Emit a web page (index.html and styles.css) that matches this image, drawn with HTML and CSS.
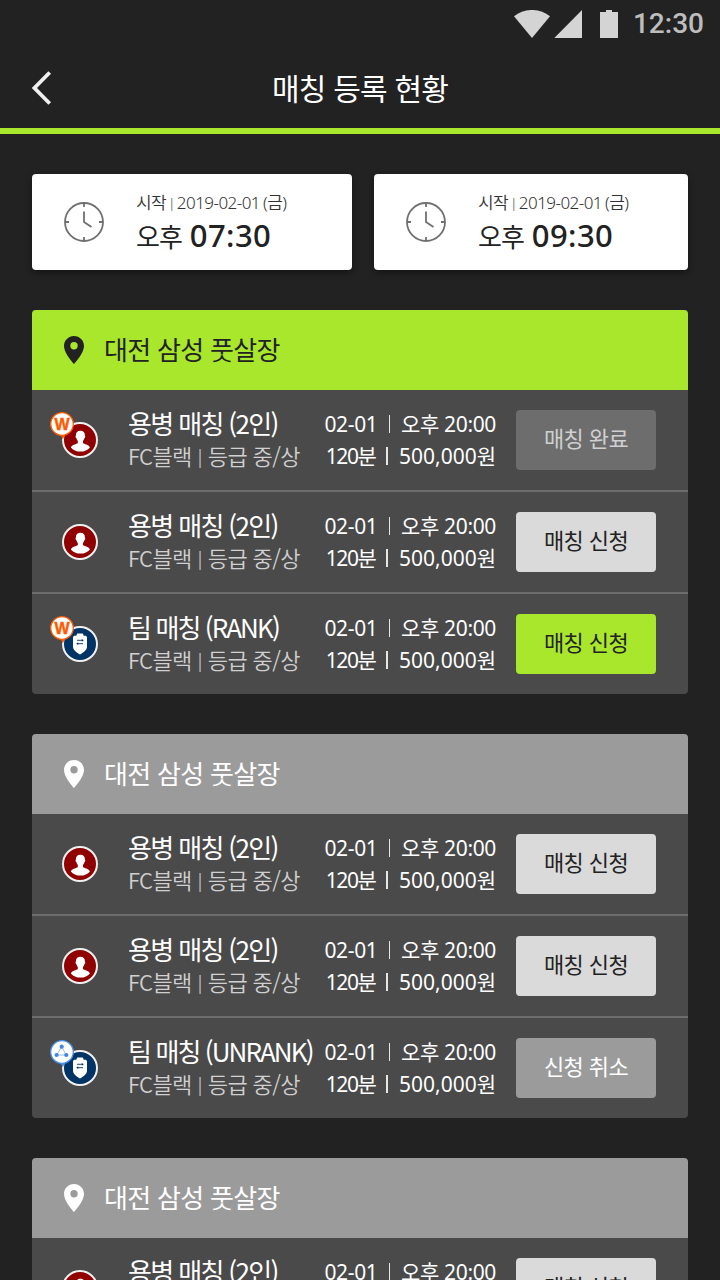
FILE: index.html
```html
<!DOCTYPE html>
<html lang="ko">
<head>
<meta charset="utf-8">
<title>매칭 등록 현황</title>
<link rel="stylesheet" href="styles.css">
</head>
<body>
<svg class="defs" width="0" height="0">
  <symbol id="clock" viewBox="0 0 40 40"><g fill="none" stroke="#707070" stroke-width="1.8"><circle cx="20" cy="20" r="19"/><path d="M20 1v4M20 35v4M1 20h4M35 20h4M20 9.5V20l7.5 5"/></g></symbol>
  <symbol id="pin" viewBox="0 0 20 28"><path fill="currentColor" fill-rule="evenodd" d="M10 0C4.4 0 0 4.4 0 9.9C0 17.2 10 28 10 28S20 17.2 20 9.9C20 4.4 15.6 0 10 0ZM10 6a3.7 3.7 0 1 1 0 7.4A3.7 3.7 0 0 1 10 6Z"/></symbol>
  <symbol id="player" viewBox="0 0 52 60"><circle cx="32" cy="30" r="17" fill="#900000" stroke="#f0f0f0" stroke-width="2"/><path fill="#fff" d="M32.4 20.8c-3 0-4.6 2-4.5 4.8c-.7.3-.3 2.4.5 2.7c.3 1.2.8 2 1.4 2.6v2.2c-1.200 1.200-5.500 1.500-6.900 4.300c2 2.600 5.600 4.200 9.500 4.200s7.500-1.600 9.500-4.200c-1.400-2.800-5.700-3.100-6.900-4.300v-2.200c.6-.6 1.100-1.400 1.400-2.600c.8-.3 1.200-2.400.5-2.700c.1-2.800-1.500-4.800-4.500-4.800Z"/></symbol>
  <symbol id="team" viewBox="0 0 52 60"><circle cx="32" cy="30" r="17" fill="#003366" stroke="#f0f0f0" stroke-width="2"/><path fill="#fff" d="M29.200 19.500h5.700l.8 2.300h2.300l1 1.500v9.200c0 3.500-3.300 5.800-7 8c-3.700-2.200-7-4.500-7-8v-9.200l1-1.500h2.300Z"/><path fill="none" stroke="#003366" stroke-width=".9" d="M29 26.300h5.500M35 29.700h-5.500"/><path fill="#003366" d="M33.800 24.900l2 1.400l-2 1.400zM30.200 28.300l-2 1.400l2 1.400z"/></symbol>
  <symbol id="badge-w" viewBox="0 0 52 60"><path fill="#ff5a00" d="M12 24h5.500l-2.700 5.200z"/><circle cx="14" cy="14" r="11.300" fill="#fff" stroke="#ff5a00" stroke-width="1.300"/></symbol>
  <symbol id="badge-net" viewBox="0 0 52 60"><path fill="#4a90e8" d="M12 24h5.500l-2.700 5.200z"/><circle cx="14" cy="14" r="11.300" fill="#fff" stroke="#4a90e8" stroke-width="1.300"/><path fill="none" stroke="#8ab6f0" stroke-width=".9" d="M13.700 8.800L8.700 17H18.200Z"/><g fill="#3f86e6"><circle cx="13.700" cy="8.700" r="2.100"/><circle cx="8.600" cy="17" r="2.100"/><circle cx="18.300" cy="17" r="2.100"/></g></symbol>
</svg>
<div class="screen">
  <div class="status">
    <svg class="signals" viewBox="0 0 104 28"><g fill="#d4d4d4"><path d="M18 28L0 6.200C10-2.100 26-2.100 36 6.200Z"/><path d="M40.300 28H68V0Z"/><path d="M86 2h6V0h6v2h6v26H86Z"/></g></svg>
    <span class="clock-text">12:30</span>
  </div>
  <header class="bar">
    <svg class="back" viewBox="0 0 20 34"><path d="M17.700 1.500L2.400 17L17.700 32.500" fill="none" stroke="#f0f0f0" stroke-width="3.800"/></svg>
    <h1 class="title">매칭 등록 현황</h1>
  </header>
  <main class="content">
    <div class="times">
      <div class="time"><svg class="clock"><use href="#clock"/></svg><div class="time-text"><div class="date">시작 <span class="pipe">|</span> 2019-02-01 (금)</div><div class="hour"><span class="ampm">오후</span><span class="digits">07:30</span></div></div></div>
      <div class="time"><svg class="clock"><use href="#clock"/></svg><div class="time-text"><div class="date">시작 <span class="pipe">|</span> 2019-02-01 (금)</div><div class="hour"><span class="ampm">오후</span><span class="digits">09:30</span></div></div></div>
    </div>

    <section class="venue">
      <h2 class="venue-head active"><svg class="pin"><use href="#pin"/></svg><span>대전 삼성 풋살장</span></h2>
      <div class="row">
        <svg class="avatar"><use href="#player"/><use href="#badge-w"/><text class="badge-letter" x="14" y="19.500">W</text></svg>
        <div class="info"><div class="name">용병 매칭 (2인)</div><div class="meta">FC블랙 <span class="pipe">|</span> 등급 중/상</div></div>
        <div class="when"><div class="line day"><span>02-01</span><i class="sep"></i><span>오후 20:00</span></div><div class="line fee"><span class="mins">120분</span><i class="sep"></i><span class="won">500,000원</span></div></div>
        <button class="btn done">매칭 완료</button>
      </div>
      <div class="row">
        <svg class="avatar"><use href="#player"/></svg>
        <div class="info"><div class="name">용병 매칭 (2인)</div><div class="meta">FC블랙 <span class="pipe">|</span> 등급 중/상</div></div>
        <div class="when"><div class="line day"><span>02-01</span><i class="sep"></i><span>오후 20:00</span></div><div class="line fee"><span class="mins">120분</span><i class="sep"></i><span class="won">500,000원</span></div></div>
        <button class="btn">매칭 신청</button>
      </div>
      <div class="row">
        <svg class="avatar"><use href="#team"/><use href="#badge-w"/><text class="badge-letter" x="14" y="19.500">W</text></svg>
        <div class="info"><div class="name rank">팀 매칭 (RANK)</div><div class="meta">FC블랙 <span class="pipe">|</span> 등급 중/상</div></div>
        <div class="when"><div class="line day"><span>02-01</span><i class="sep"></i><span>오후 20:00</span></div><div class="line fee"><span class="mins">120분</span><i class="sep"></i><span class="won">500,000원</span></div></div>
        <button class="btn primary">매칭 신청</button>
      </div>
    </section>

    <section class="venue">
      <h2 class="venue-head"><svg class="pin"><use href="#pin"/></svg><span>대전 삼성 풋살장</span></h2>
      <div class="row">
        <svg class="avatar"><use href="#player"/></svg>
        <div class="info"><div class="name">용병 매칭 (2인)</div><div class="meta">FC블랙 <span class="pipe">|</span> 등급 중/상</div></div>
        <div class="when"><div class="line day"><span>02-01</span><i class="sep"></i><span>오후 20:00</span></div><div class="line fee"><span class="mins">120분</span><i class="sep"></i><span class="won">500,000원</span></div></div>
        <button class="btn">매칭 신청</button>
      </div>
      <div class="row">
        <svg class="avatar"><use href="#player"/></svg>
        <div class="info"><div class="name">용병 매칭 (2인)</div><div class="meta">FC블랙 <span class="pipe">|</span> 등급 중/상</div></div>
        <div class="when"><div class="line day"><span>02-01</span><i class="sep"></i><span>오후 20:00</span></div><div class="line fee"><span class="mins">120분</span><i class="sep"></i><span class="won">500,000원</span></div></div>
        <button class="btn">매칭 신청</button>
      </div>
      <div class="row">
        <svg class="avatar"><use href="#team"/><use href="#badge-net"/></svg>
        <div class="info"><div class="name rank">팀 매칭 (UNRANK)</div><div class="meta">FC블랙 <span class="pipe">|</span> 등급 중/상</div></div>
        <div class="when"><div class="line day"><span>02-01</span><i class="sep"></i><span>오후 20:00</span></div><div class="line fee"><span class="mins">120분</span><i class="sep"></i><span class="won">500,000원</span></div></div>
        <button class="btn cancel">신청 취소</button>
      </div>
    </section>

    <section class="venue">
      <h2 class="venue-head"><svg class="pin"><use href="#pin"/></svg><span>대전 삼성 풋살장</span></h2>
      <div class="row">
        <svg class="avatar"><use href="#player"/></svg>
        <div class="info"><div class="name">용병 매칭 (2인)</div><div class="meta">FC블랙 <span class="pipe">|</span> 등급 중/상</div></div>
        <div class="when"><div class="line day"><span>02-01</span><i class="sep"></i><span>오후 20:00</span></div><div class="line fee"><span class="mins">120분</span><i class="sep"></i><span class="won">500,000원</span></div></div>
        <button class="btn">매칭 신청</button>
      </div>
    </section>
  </main>
</div>
</body>
</html>
```
FILE: styles.css
```css
* { box-sizing: border-box; }
body {
  margin: 0;
  background: #222;
  color: #fff;
  font-family: "Noto Sans CJK KR", sans-serif;
}
.defs { display: block; height: 0; }
.screen { width: 720px; height: 1280px; overflow: hidden; }

.status {
  height: 48px;
  padding-right: 16px;
  display: flex;
  align-items: center;
  justify-content: flex-end;
  gap: 15px;
}
.signals { width: 104px; height: 28px; }
.clock-text {
  font: 500 28px/48px Roboto, sans-serif;
  color: #bdbdbd;
}

.bar {
  height: 86px;
  border-bottom: 6px solid #a9e72c;
  padding: 0 32px;
  display: grid;
  grid-template-columns: 20px 1fr 20px;
  align-items: center;
}
.back { width: 20px; height: 34px; }
.title {
  margin: 0;
  padding-bottom: 3px;
  text-align: center;
  font-size: 30px;
  line-height: 44px;
  font-weight: 400;
  letter-spacing: -.8px;
}

.content { padding: 40px 32px 0; }
.times {
  display: grid;
  grid-template-columns: 320px 314px;
  gap: 22px;
  margin-bottom: 40px;
}
.time {
  height: 96px;
  padding-left: 32px;
  display: flex;
  align-items: center;
  gap: 32px;
  background: #fff;
  color: #222;
  border-radius: 4px;
  box-shadow: 0 3px 6px rgba(0, 0, 0, .4);
}
.clock { width: 40px; height: 40px; }
.time-text { padding-top: 3px; }
.date {
  font: 350 17px/24px "Noto Sans", "Noto Sans CJK KR", sans-serif;
  letter-spacing: -.55px;
  word-spacing: -.8px;
  color: #333;
}
.date .pipe { margin: 0 -1px; font-size: 13px; vertical-align: 1px; }
.hour {
  display: flex;
  align-items: baseline;
  gap: 8px;
  line-height: 40px;
}
.ampm { font-size: 26px; letter-spacing: -1px; }
.digits {
  font-family: "Noto Sans", sans-serif;
  font-size: 31px;
  font-weight: 500;
  letter-spacing: .4px;
}

.venue {
  margin-bottom: 40px;
  background: #4a4a4a;
  border-radius: 4px;
  overflow: hidden;
}
.venue-head {
  margin: 0;
  height: 80px;
  padding-left: 32px;
  display: flex;
  align-items: center;
  gap: 20px;
  background: #9b9b9b;
  color: #fff;
  font-size: 26px;
  font-weight: 400;
  letter-spacing: -.7px;
}
.venue-head span { padding-bottom: 4px; }
.venue-head.active { background: #a9e72c; color: #222; }
.pin { width: 20px; height: 28px; }
.row {
  height: 100px;
  padding: 0 32px 0 16px;
  display: grid;
  grid-template-columns: 80px 184px 204px 140px;
  align-items: center;
}
.row + .row { height: 102px; border-top: 2px solid #6d6d6d; }
.avatar { width: 52px; height: 60px; }
.badge-letter {
  font: 700 16px "Liberation Sans", sans-serif;
  fill: #ff5a00;
  stroke: #ff5a00;
  stroke-width: .4px;
  text-anchor: middle;
}
.info { padding-bottom: 3px; white-space: nowrap; }
.name { font-size: 26px; line-height: 34px; letter-spacing: -1.65px; }
.name.rank { letter-spacing: -1.9px; }
.meta {
  height: 32px;
  font-size: 22px;
  line-height: 31px;
  font-weight: 350;
  letter-spacing: -.65px;
  color: #d0d0d0;
}
.meta .pipe { margin: 0 .7px; font-size: 17px; line-height: 1; vertical-align: 2px; }
.when { padding: 0 20px 1px 0; }
.line {
  display: flex;
  justify-content: flex-end;
  align-items: center;
  font: 400 21px/32px "Noto Sans", "Noto Sans CJK KR", sans-serif;
  letter-spacing: -.35px;
  white-space: nowrap;
}
.mins { letter-spacing: -1.4px; }
.won { letter-spacing: 0; }
.sep { flex: none; width: 1.5px; height: 18px; margin: 0 11px; background: #e6e6e6; }
.btn {
  width: 140px;
  height: 60px;
  padding: 0 0 5px;
  border: 0;
  border-radius: 4px;
  background: #dadada;
  color: #222;
  font: 400 22px/55px "Noto Sans CJK KR", sans-serif;
  letter-spacing: -.6px;
}
.btn.done { background: #6d6d6d; color: #d0d0d0; }
.btn.primary { background: #a9e72c; }
.btn.cancel { background: #9b9b9b; color: #fff; }
```
